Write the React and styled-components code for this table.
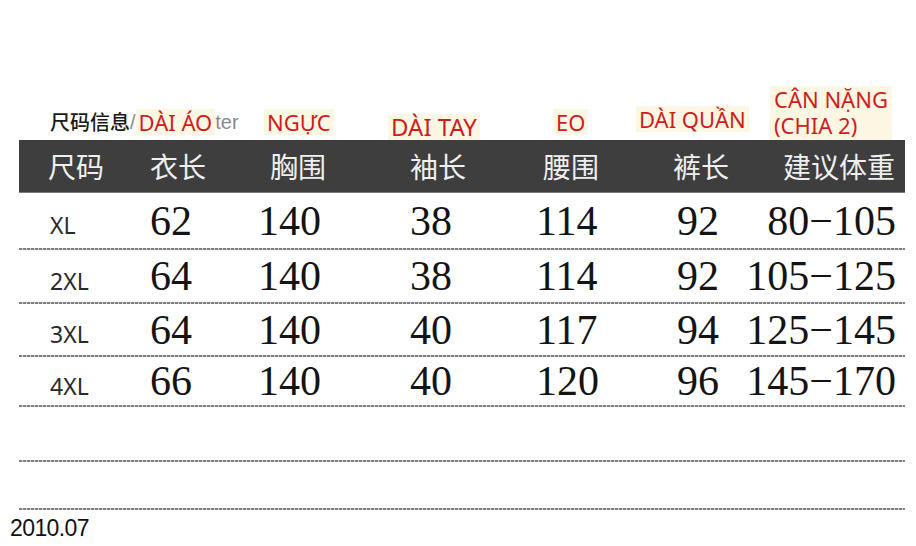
import React from "react";
import styled, { createGlobalStyle, css } from "styled-components";

const Global = createGlobalStyle`
  html, body { margin: 0; padding: 0; background: #ffffff; }
  body { width: 916px; height: 546px; overflow: hidden; font-family: "Noto Sans", "Noto Sans CJK SC", sans-serif; }
`;

const gridCols = css`
  display: grid;
  grid-template-columns: 126px 108px 152px 125px 142px 68px 165px;
`;

const Page = styled.div`
  display: flex;
  flex-direction: column;
  padding-top: 84px;
`;

const Table = styled.div`
  display: flex;
  flex-direction: column;
  margin-left: 19px;
  width: 886px;
`;

const Notes = styled.div`
  display: grid;
  grid-template-columns: 214px 124px 165px 83px 134px 1fr;
  height: 56px;
  padding-left: 31px;
  align-items: end;
`;

const TitleGroup = styled.div`
  display: flex;
  align-items: center;
  margin-bottom: 5px;
  white-space: nowrap;
`;

const TitleCn = styled.span`
  font-family: "Noto Sans CJK SC", sans-serif;
  font-size: 20px;
  font-weight: 500;
  color: #1a1a1a;
  line-height: 26px;
`;

const TitleEn = styled.span`
  font-family: "Liberation Sans", Arial, sans-serif;
  font-size: 20px;
  color: #8a8a8a;
  line-height: 26px;
`;

const Note = styled.div`
  justify-self: start;
  font-family: "Noto Sans", sans-serif;
  font-size: ${(p) => p.$size || 22}px;
  line-height: ${(p) => (p.$multi ? "26px" : "24px")};
  color: #cf1d1d;
  background: #fcf7e2;
  padding: ${(p) => (p.$multi ? "0 4px 2px" : "1px 3px")};
  margin-bottom: ${(p) => p.$lift || 0}px;
  white-space: nowrap;
`;

const Header = styled.div`
  ${gridCols};
  height: 52px;
  align-items: center;
  background: #3e3e3e;
  border-bottom: 1px solid #7a7a7a;
`;

const HeadCell = styled.div`
  font-family: "Noto Sans CJK SC", sans-serif;
  font-size: 28px;
  color: #efefef;
  line-height: 1;
  text-align: ${(p) => p.$align || "left"};
  padding-left: ${(p) => (p.$align === "right" ? 0 : p.$pad)}px;
  padding-right: ${(p) => (p.$align === "right" ? p.$pad : 0)}px;
  white-space: nowrap;
`;

const Row = styled.div`
  ${gridCols};
  height: ${(p) => p.$h}px;
  align-items: center;
`;

const SizeCell = styled.div`
  font-family: "Noto Sans", sans-serif;
  font-size: 23px;
  color: #2a2a2a;
  line-height: 1;
  padding-left: ${(p) => p.$pad}px;
  padding-top: 10px;
`;

const NumCell = styled.div`
  font-family: "Liberation Serif", "Times New Roman", serif;
  font-size: 42px;
  color: #141414;
  line-height: 1;
  text-align: ${(p) => p.$align || "left"};
  padding-left: ${(p) => (p.$align === "right" ? 0 : p.$pad)}px;
  padding-right: ${(p) => (p.$align === "right" ? p.$pad : 0)}px;
  white-space: nowrap;
`;

const Dash = styled.div`
  height: 2px;
  background: repeating-linear-gradient(90deg, #7f7f7f 0 3px, #d6d6d6 3px 4px);
`;

const Footer = styled.div`
  font-family: "Liberation Sans", Arial, sans-serif;
  font-size: 23px;
  letter-spacing: -0.6px;
  line-height: 23px;
  color: #111;
  margin: 7px 0 0 10px;
`;

const columns = [
  { head: "尺码", headPad: 29, pad: 31 },
  { head: "衣长", headPad: 5, pad: 5 },
  { head: "胸围", headPad: 17, pad: 5 },
  { head: "袖长", headPad: 5, pad: 5 },
  { head: "腰围", headPad: 13, pad: 6 },
  { head: "裤长", headPad: 1, pad: 5 },
  { head: "建议体重", headPad: 10, pad: 9, align: "right" },
];

const rows = [
  { h: 55, cells: ["XL", "62", "140", "38", "114", "92", "80−105"] },
  { h: 52, cells: ["2XL", "64", "140", "38", "114", "92", "105−125"] },
  { h: 51, cells: ["3XL", "64", "140", "40", "117", "94", "125−145"] },
  { h: 48, cells: ["4XL", "66", "140", "40", "120", "96", "145−170"] },
  { h: 53, cells: null },
  { h: 46, cells: null },
];

export default function App() {
  return (
    <>
      <Global />
      <Page>
        <Table>
          <Notes>
            <TitleGroup>
              <TitleCn>尺码信息</TitleCn>
              <TitleEn>/</TitleEn>
              <Note>DÀI ÁO</Note>
              <TitleEn>ter</TitleEn>
            </TitleGroup>
            <Note $lift={5}>NGỰC</Note>
            <Note $lift={0} $size={24}>DÀI TAY</Note>
            <Note $lift={5}>EO</Note>
            <Note $lift={8}>DÀI QUẦN</Note>
            <Note $multi $lift={0}>
              CÂN NẶNG
              <br />
              (CHIA 2)
            </Note>
          </Notes>
          <Header>
            {columns.map((c) => (
              <HeadCell key={c.head} $pad={c.headPad} $align={c.align}>
                {c.head}
              </HeadCell>
            ))}
          </Header>
          {rows.map((r, i) => (
            <React.Fragment key={i}>
              <Row $h={r.h}>
                {r.cells &&
                  r.cells.map((v, j) =>
                    j === 0 ? (
                      <SizeCell key={j} $pad={columns[j].pad}>
                        {v}
                      </SizeCell>
                    ) : (
                      <NumCell key={j} $pad={columns[j].pad} $align={columns[j].align}>
                        {v}
                      </NumCell>
                    )
                  )}
              </Row>
              <Dash />
            </React.Fragment>
          ))}
        </Table>
        <Footer>2010.07</Footer>
      </Page>
    </>
  );
}
